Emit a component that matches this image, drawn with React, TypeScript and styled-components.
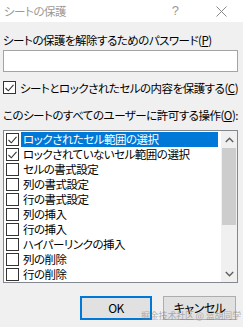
import React from "react";
import styled, { createGlobalStyle } from "styled-components";

const GlobalStyle = createGlobalStyle`
  html, body {
    margin: 0;
    padding: 0;
    background: #f0f0f0;
  }
  body {
    font-family: "Noto Sans CJK JP", "Noto Sans", sans-serif;
    font-size: 11.5px;
    letter-spacing: -0.5px;
    color: #000;
    font-feature-settings: "palt";
  }
`;

const Dialog = styled.div`
  position: relative;
  width: 243px;
  height: 327px;
  background: #f0f0f0;
  display: flex;
  flex-direction: column;
  overflow: hidden;
`;

const TitleBar = styled.div`
  height: 22px;
  background: #fff;
  display: flex;
  align-items: center;
  padding-left: 4px;
  color: #9a9a9a;
`;

const Title = styled.div`
  flex-grow: 1;
  line-height: 14px;
`;

const TitleButton = styled.div<{ $w: number; $gap?: number }>`
  width: ${(p) => p.$w}px;
  margin-right: ${(p) => p.$gap ?? 0}px;
  font-family: "Liberation Sans", sans-serif;
  font-size: 13px;
  color: #999;
  line-height: 14px;
  display: flex;
  justify-content: center;
`;

const Body = styled.div`
  display: flex;
  flex-direction: column;
  padding: 0 5px 0 3px;
`;

const Label = styled.div<{ $top: number }>`
  margin-top: ${(p) => p.$top}px;
  line-height: 14px;
  height: 14px;
  white-space: nowrap;
`;

const Key = styled.span`
  text-decoration: underline;
  text-underline-offset: 1px;
`;

const PasswordInput = styled.div`
  margin-top: 3px;
  height: 20px;
  background: #fff;
  border: 1px solid #a4a4a4;
`;

const CheckRow = styled.div`
  margin-top: 8px;
  display: flex;
  align-items: center;
  gap: 4px;
  line-height: 14px;
  height: 15px;
  white-space: nowrap;
`;

const Box = styled.span`
  width: 11px;
  height: 11px;
  border: 1px solid #333;
  background: #fff;
  flex-shrink: 0;
  display: flex;
  align-items: center;
  justify-content: center;
`;

const ListBox = styled.div`
  margin-top: 8px;
  height: 151px;
  background: #fff;
  border: 1px solid #828790;
  display: flex;
`;

const Items = styled.div`
  flex-grow: 1;
  display: flex;
  flex-direction: column;
  padding: 1px 0 0 1px;
`;

const Item = styled.div`
  height: 15px;
  display: flex;
  align-items: center;
`;

const ItemBox = styled(Box)`
  margin-left: 1px;
`;

const ItemText = styled.span<{ $sel: boolean }>`
  margin-left: 2px;
  padding: 0 2px;
  height: 15px;
  line-height: 15px;
  flex-grow: ${(p) => (p.$sel ? 1 : 0)};
  background: ${(p) => (p.$sel ? "#0078d7" : "transparent")};
  color: ${(p) => (p.$sel ? "#fff" : "#000")};
  white-space: nowrap;
  margin-right: 3px;
`;

const ScrollBar = styled.div`
  width: 16px;
  background: #f0f0f0;
  display: flex;
  flex-direction: column;
`;

const Arrow = styled.div`
  height: 17px;
  display: flex;
  align-items: center;
  justify-content: center;
`;

const Track = styled.div`
  flex-grow: 1;
  display: flex;
  flex-direction: column;
`;

const Thumb = styled.div`
  height: 77px;
  margin: 0 1px;
  background: #cdcdcd;
`;

const Buttons = styled.div`
  margin-top: 13px;
  padding-right: 2px;
  display: flex;
  justify-content: flex-end;
  gap: 11px;
`;

const Button = styled.div<{ $default?: boolean }>`
  box-sizing: border-box;
  width: ${(p) => (p.$default ? 72 : 73)}px;
  height: 24px;
  background: #e1e1e1;
  border: ${(p) => (p.$default ? "2px solid #0078d7" : "1px solid #adadad")};
  display: flex;
  align-items: center;
  justify-content: center;
  line-height: 14px;
  font-size: 12px;
`;

const Watermark = styled.div`
  position: absolute;
  left: 141px;
  top: 310px;
  font-size: 9px;
  letter-spacing: -0.2px;
  line-height: 11px;
  color: rgba(120, 120, 120, 0.55);
  white-space: nowrap;
`;

function Check() {
  return (
    <svg width="9" height="8" viewBox="0 0 9 8">
      <path d="M0.5 4 L3.3 6.8 L8.5 0.8" fill="none" stroke="#333" strokeWidth="1.1" />
    </svg>
  );
}

const items = [
  "ロックされたセル範囲の選択",
  "ロックされていないセル範囲の選択",
  "セルの書式設定",
  "列の書式設定",
  "行の書式設定",
  "列の挿入",
  "行の挿入",
  "ハイパーリンクの挿入",
  "列の削除",
  "行の削除",
];

export default function App() {
  return (
    <Dialog>
      <GlobalStyle />
      <TitleBar>
        <Title>シートの保護</Title>
        <TitleButton $w={16} $gap={16}>?</TitleButton>
        <TitleButton $w={44}>
          <svg width="11" height="11" viewBox="0 0 11 11">
            <path d="M0.5 0.5 L10.5 10.5 M10.5 0.5 L0.5 10.5" stroke="#888" strokeWidth="1" />
          </svg>
        </TitleButton>
      </TitleBar>
      <Body>
        <Label $top={11}>
          シートの保護を解除するためのパスワード(<Key>P</Key>)
        </Label>
        <PasswordInput />
        <CheckRow>
          <Box>
            <Check />
          </Box>
          <span>
            シートとロックされたセルの内容を保護する(<Key>C</Key>)
          </span>
        </CheckRow>
        <Label $top={13}>
          このシートのすべてのユーザーに許可する操作(<Key>O</Key>):
        </Label>
        <ListBox>
          <Items>
            {items.map((t, i) => (
              <Item key={t}>
                <ItemBox>{i < 2 && <Check />}</ItemBox>
                <ItemText $sel={i === 0}>{t}</ItemText>
              </Item>
            ))}
          </Items>
          <ScrollBar>
            <Arrow>
              <svg width="9" height="6" viewBox="0 0 9 6">
                <path d="M0.8 5 L4.5 1.3 L8.2 5" fill="none" stroke="#606060" strokeWidth="1.4" />
              </svg>
            </Arrow>
            <Track>
              <Thumb />
            </Track>
            <Arrow>
              <svg width="9" height="6" viewBox="0 0 9 6">
                <path d="M0.8 1 L4.5 4.7 L8.2 1" fill="none" stroke="#606060" strokeWidth="1.4" />
              </svg>
            </Arrow>
          </ScrollBar>
        </ListBox>
        <Buttons>
          <Button $default>OK</Button>
          <Button>キャンセル</Button>
        </Buttons>
      </Body>
      <Watermark>掘金技术社区 @ 蓝胡同学</Watermark>
    </Dialog>
  );
}
